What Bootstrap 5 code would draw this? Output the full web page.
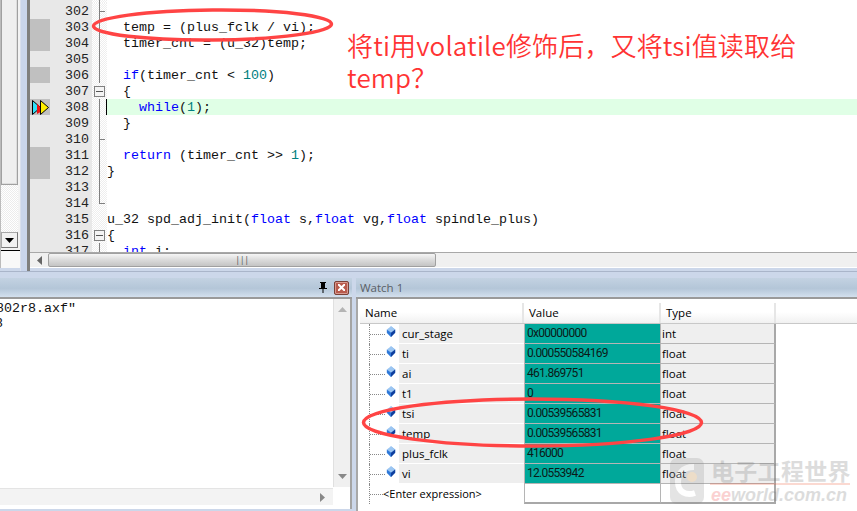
<!DOCTYPE html>
<html lang="zh">
<head>
<meta charset="utf-8">
<title>Watch</title>
<link href="https://cdn.jsdelivr.net/npm/bootstrap@5.3.0/dist/css/bootstrap.min.css" rel="stylesheet">
<style>
html,body{margin:0;padding:0;background:#fff}
.ide-root{position:relative;width:857px;height:511px;overflow:hidden;background:#ccd7ea;font-family:"Open Sans","Liberation Sans",sans-serif;font-size:11.5px;color:#000}
.ide-top{height:271px}
.left-rail{width:20px;height:268px;background:#f3f3f3;border-left:1px solid #bbb}
.rail-thumb{height:185px;width:17px;background:#efefef;border:1px solid #a0a0a0;border-top:0;box-shadow:inset -1px -1px 0 #ddd}
.rail-track{height:47px;width:17px;background:repeating-conic-gradient(#fff 0 25%,#ececec 0 50%) 0 0/2px 2px}
.rail-btn{height:16px;width:17px;background:#f2f2f2;border:1px solid #a8a8a8;border-right-color:#777;border-bottom-color:#777}
.rail-foot{border-top:1px solid #000;margin-top:2px;flex:1;background:#f8f8f8}
.frame-edge{width:10px;background:#c9d5ec;border-left:1px solid #d8dfee;border-right:3px solid #7f7f7f}
.editor{flex:1;min-width:0;height:268px;background:#fff;border-bottom:1px solid #fff}
.code-view{height:253px;overflow:hidden}
.code-row{display:grid;grid-template-columns:20px 42px 15px 1fr;height:16px;font:13.33px/18px "Liberation Mono",monospace;color:#111;white-space:pre;overflow:hidden}
.code-row.stub{height:3px}
.c-mark{background:#e8e8e8;height:16px}
.c-mark.on{background:#c0c0c0}
.c-num{background:#e8e8e8;text-align:right;padding-right:3px;color:#222;height:16px}
.c-fold{display:flex;align-items:center;justify-content:center;height:16px;background-color:#fff;background-image:repeating-conic-gradient(#fff 0 25%,#eee 0 50%);background-size:2px 2px}
.c-fold.vl{background-image:linear-gradient(#808080,#808080),repeating-conic-gradient(#fff 0 25%,#eee 0 50%);background-size:1px 100%,2px 2px;background-position:7px 0,0 0;background-repeat:no-repeat,repeat}
.c-fold.tick{background-image:linear-gradient(#808080,#808080),linear-gradient(#808080,#808080),repeating-conic-gradient(#fff 0 25%,#eee 0 50%);background-size:1px 100%,6px 1px,2px 2px;background-position:7px 0,7px 8px,0 0;background-repeat:no-repeat,no-repeat,repeat}
.c-fold.end{background-image:linear-gradient(#808080,#808080),linear-gradient(#808080,#808080),repeating-conic-gradient(#fff 0 25%,#eee 0 50%);background-size:1px 8px,6px 1px,2px 2px;background-position:7px 0,7px 8px,0 0;background-repeat:no-repeat,no-repeat,repeat}
.fold-box{display:block;width:11px;height:11px;margin-left:-1px;border:1px solid #808080;background:linear-gradient(#555,#555) center/7px 1px no-repeat,#f4f4f4}
.c-code{overflow:hidden;height:16px}
.code-row.cur .c-code{background:#e0ffe6;border-left:1px solid #000;margin-left:-1px}
.kw{color:#00f}.nm{color:#008080}
.hbar{height:15px;background:#f0f0f0;border-top:1px solid #a8a8a8;padding-left:1px}
.hbar-arrow{width:17px}
.hbar-thumb{width:388px;background:linear-gradient(#f6f6f6,#d8d8d8 55%,#c4c4c4);border:1px solid #a0a0a0;border-radius:2px;color:#555;font-size:9px;line-height:12px;letter-spacing:-.5px}
.band{height:7px;background:#ccd7ea;border-top:1px solid #aab5ca}
.ide-bottom{height:233px}
.pane-left{width:352px;background:#ccd7ea}
.pane-head{height:21px;background:linear-gradient(#c3d2e2,#b4c6d8 55%,#d3e0ee);border-bottom:2px solid #9a9a9a}
.pin-ic{margin-right:7px}
.close-ic{width:15px;height:14px;margin-right:3px;background:#b85a4c;border:1px solid #7a4036;border-radius:2px;box-shadow:inset 0 0 0 1px #d89a90}
.pane-body{height:210px;background:#fff;border-right:2px solid #a4a4a4}
.log-text{font:13.33px/15px "Liberation Mono",monospace;padding-top:2px;white-space:pre;color:#111;height:188px}
.log-text div:first-child{margin-left:-4px}
.log-text div:last-child{margin-left:-5px}
.v-scroll{width:17px;height:188px;background:#f0f0f0;border-left:1px solid #e0e0e0}
.h-scroll{height:17px;background:#f3f3f3;margin-top:1px;margin-right:17px;border-top:1px solid #e4e4e4}
.pane-gap{width:4px;background:#ccd7ea}
.pane-right{flex:1;min-width:0}
.tab-title{color:#5a5f66;padding-left:4px;line-height:20px;font-size:11.5px}
.watch-body{height:212px;background:#fff;border-left:2px solid #a8a8a8;padding:4px 0 0 2px}
.w-grid{display:grid;grid-template-columns:164px 137px 115px 1fr}
.w-head{height:21px;line-height:20px;border-bottom:1px solid #c8c8c8;background:linear-gradient(#fff 45%,#f1f1f1)}
.w-head>div{padding-left:5px;border-right:2px solid #e6e6e6}
.w-row{height:20px;line-height:19px}
.w-name{display:flex;height:20px;padding-left:9px}
.w-tree{width:17px;border-left:1px dotted #888;flex:none;background:linear-gradient(90deg,#888 50%,transparent 0) 0 10px/2px 1px repeat-x}
.w-ic{width:13px;flex:none;padding-top:2px;line-height:0}
.w-lab{flex:1;background:#eee;border-bottom:1px solid #fff;padding-left:3px}
.w-val{background:#00a89a;border-left:1px solid #b5b5b5;border-right:1px solid #b5b5b5;border-bottom:1px solid #b5b5b5;padding-left:2px;color:#0c1a18;font-family:Roboto,sans-serif;font-size:12px;letter-spacing:-.72px}
.w-typ{background:#efefef;border-right:2px solid #a8a8a8;border-bottom:1px solid #b5b5b5;padding-left:1px}
.w-val.blank,.w-typ.blank{background:#fff;border-bottom:2px solid #a8a8a8}
.w-enter{display:flex;height:20px;padding-left:9px;line-height:19px;font-size:11px}
.w-enter .w-tree{width:14px}
.ovl{position:absolute;left:0;top:0;pointer-events:none}
.note{position:absolute;left:347px;top:29px;color:#ff3333;font:26px/32px "Noto Sans CJK SC","Noto Sans",sans-serif;letter-spacing:.16px;white-space:pre;font-weight:350;pointer-events:none}
.wm{position:absolute;left:665px;top:452px;width:190px;height:58px;opacity:.22;pointer-events:none;color:#555}
.wm-logo{position:absolute;left:5px;top:6px}
.wm-cn{position:absolute;left:46px;top:6px;font:700 23px/24px "Noto Sans CJK SC",sans-serif;letter-spacing:.3px;white-space:pre;color:#666}
.wm-line{position:absolute;left:45px;top:31px;width:140px;height:2px;background:#e53}
.wm-en{position:absolute;left:46px;top:34px;font:italic 700 18px/18px "Liberation Sans",sans-serif;white-space:pre;color:#666}
.wm-en b{color:#e33;font-weight:700}
</style>
</head>
<body>
<svg width="0" height="0" class="d-block" aria-hidden="true"><defs>
<symbol id="cube" viewBox="0 0 12 14"><path d="M6 0 11 4 11 8 6 13 1 8Z" fill="#6fa8e8"/><path d="M6 0 11 4 6 8 1 4Z" fill="#9cc6f2"/><path d="M11 4 11 8 6 13 6 8Z" fill="#0f3f9e"/><path d="M1 4 1 8 6 13 6 8Z" fill="#2f78d8"/></symbol>
</defs></svg>
<div class="ide-root">
  <div class="ide-top d-flex">
    <div class="left-rail d-flex flex-column">
      <div class="rail-thumb"></div>
      <div class="rail-track"></div>
      <div class="rail-btn d-flex align-items-center justify-content-center"><svg width="9" height="5"><path d="M0 0H9L4.500 5Z" fill="#000"/></svg></div>
      <div class="rail-foot"></div>
    </div>
    <div class="frame-edge"></div>
    <div class="editor d-flex flex-column">
      <div class="code-view">
        <div class="code-row stub"><div class="c-mark"></div><div class="c-num"></div><div class="c-fold vl"></div><div></div></div>
        <div class="code-row"><div class="c-mark"></div><div class="c-num">302</div><div class="c-fold tick"></div><div class="c-code"></div></div>
        <div class="code-row"><div class="c-mark on"></div><div class="c-num">303</div><div class="c-fold vl"></div><div class="c-code">  temp = (plus_fclk / vi);</div></div>
        <div class="code-row"><div class="c-mark on"></div><div class="c-num">304</div><div class="c-fold vl"></div><div class="c-code">  timer_cnt = (u_32)temp;</div></div>
        <div class="code-row"><div class="c-mark"></div><div class="c-num">305</div><div class="c-fold vl"></div><div class="c-code"></div></div>
        <div class="code-row"><div class="c-mark on"></div><div class="c-num">306</div><div class="c-fold vl"></div><div class="c-code">  <span class="kw">if</span>(timer_cnt &lt; <span class="nm">100</span>)</div></div>
        <div class="code-row"><div class="c-mark"></div><div class="c-num">307</div><div class="c-fold"><span class="fold-box"></span></div><div class="c-code">  {</div></div>
        <div class="code-row cur"><div class="c-mark on d-flex align-items-center"><svg width="20" height="15" viewBox="0 0 20 15"><path d="M2.500 .5 10.500 7.500 2.500 14.500Z" fill="#30e0f8" stroke="#000"/><path d="M7 10V3.500L10.500 7.500 10.500 12 7 14Z" fill="#f01010"/><path d="M10.500 .5 18.500 7.500 10.500 14.500Z" fill="#ffee00" stroke="#000"/></svg></div><div class="c-num">308</div><div class="c-fold vl"></div><div class="c-code">    <span class="kw">while</span>(<span class="nm">1</span>);</div></div>
        <div class="code-row"><div class="c-mark"></div><div class="c-num">309</div><div class="c-fold vl"></div><div class="c-code">  }</div></div>
        <div class="code-row"><div class="c-mark"></div><div class="c-num">310</div><div class="c-fold tick"></div><div class="c-code"></div></div>
        <div class="code-row"><div class="c-mark on"></div><div class="c-num">311</div><div class="c-fold vl"></div><div class="c-code">  <span class="kw">return</span> (timer_cnt &gt;&gt; <span class="nm">1</span>);</div></div>
        <div class="code-row"><div class="c-mark on"></div><div class="c-num">312</div><div class="c-fold vl"></div><div class="c-code">}</div></div>
        <div class="code-row"><div class="c-mark"></div><div class="c-num">313</div><div class="c-fold vl"></div><div class="c-code"></div></div>
        <div class="code-row"><div class="c-mark"></div><div class="c-num">314</div><div class="c-fold end"></div><div class="c-code"></div></div>
        <div class="code-row"><div class="c-mark"></div><div class="c-num">315</div><div class="c-fold"></div><div class="c-code">u_32 spd_adj_init(<span class="kw">float</span> s,<span class="kw">float</span> vg,<span class="kw">float</span> spindle_plus)</div></div>
        <div class="code-row"><div class="c-mark"></div><div class="c-num">316</div><div class="c-fold"><span class="fold-box"></span></div><div class="c-code">{</div></div>
        <div class="code-row"><div class="c-mark"></div><div class="c-num">317</div><div class="c-fold vl"></div><div class="c-code">  <span class="kw">int</span> i;</div></div>
      </div>
      <div class="hbar d-flex">
        <div class="hbar-arrow d-flex align-items-center justify-content-center"><svg width="5" height="9"><path d="M5 0V9L0 4.500Z" fill="#666"/></svg></div>
        <div class="hbar-thumb text-center">|||</div>
      </div>
    </div>
  </div>
  <div class="band"></div>
  <div class="ide-bottom d-flex">
    <div class="pane-left">
      <div class="pane-head d-flex justify-content-end align-items-center">
        <svg class="pin-ic" width="8" height="11" viewBox="0 0 8 11"><path d="M1 0H7V1H6V6H8V7H4.500V11H3.500V7H0V6H2V1H1Z" fill="#000"/></svg>
        <div class="close-ic d-flex align-items-center justify-content-center"><svg width="7" height="7"><path d="M0 0 7 7M7 0 0 7" stroke="#fff" stroke-width="2"/></svg></div>
      </div>
      <div class="pane-body d-flex flex-column">
        <div class="d-flex">
          <div class="log-text flex-grow-1 overflow-hidden"><div>802r8.axf"</div><div>8</div></div>
          <div class="v-scroll d-flex flex-column justify-content-between align-items-center py-2">
            <svg width="9" height="5"><path d="M0 5H9L4.500 0Z" fill="#b4b4b4"/></svg>
            <svg width="9" height="5"><path d="M0 0H9L4.500 5Z" fill="#888"/></svg>
          </div>
        </div>
        <div class="h-scroll d-flex justify-content-end align-items-center pe-2"><svg width="5" height="9"><path d="M0 0V9L5 4.500Z" fill="#888"/></svg></div>
      </div>
    </div>
    <div class="pane-gap"></div>
    <div class="pane-right">
      <div class="pane-head tab-title">Watch 1</div>
      <div class="watch-body">
        <div class="w-grid w-head"><div>Name</div><div>Value</div><div>Type</div><div class="border-0"></div></div>
        <div class="w-grid w-row"><div class="w-name"><div class="w-tree"></div><div class="w-ic"><svg width="10" height="12"><use href="#cube"/></svg></div><div class="w-lab">cur_stage</div></div><div class="w-val">0x00000000</div><div class="w-typ">int</div></div>
        <div class="w-grid w-row"><div class="w-name"><div class="w-tree"></div><div class="w-ic"><svg width="10" height="12"><use href="#cube"/></svg></div><div class="w-lab">ti</div></div><div class="w-val">0.000550584169</div><div class="w-typ">float</div></div>
        <div class="w-grid w-row"><div class="w-name"><div class="w-tree"></div><div class="w-ic"><svg width="10" height="12"><use href="#cube"/></svg></div><div class="w-lab">ai</div></div><div class="w-val">461.869751</div><div class="w-typ">float</div></div>
        <div class="w-grid w-row"><div class="w-name"><div class="w-tree"></div><div class="w-ic"><svg width="10" height="12"><use href="#cube"/></svg></div><div class="w-lab">t1</div></div><div class="w-val">0</div><div class="w-typ">float</div></div>
        <div class="w-grid w-row"><div class="w-name"><div class="w-tree"></div><div class="w-ic"><svg width="10" height="12"><use href="#cube"/></svg></div><div class="w-lab">tsi</div></div><div class="w-val">0.00539565831</div><div class="w-typ">float</div></div>
        <div class="w-grid w-row"><div class="w-name"><div class="w-tree"></div><div class="w-ic"><svg width="10" height="12"><use href="#cube"/></svg></div><div class="w-lab">temp</div></div><div class="w-val">0.00539565831</div><div class="w-typ">float</div></div>
        <div class="w-grid w-row"><div class="w-name"><div class="w-tree"></div><div class="w-ic"><svg width="10" height="12"><use href="#cube"/></svg></div><div class="w-lab">plus_fclk</div></div><div class="w-val">416000</div><div class="w-typ">float</div></div>
        <div class="w-grid w-row"><div class="w-name"><div class="w-tree"></div><div class="w-ic"><svg width="10" height="12"><use href="#cube"/></svg></div><div class="w-lab">vi</div></div><div class="w-val">12.0553942</div><div class="w-typ">float</div></div>
        <div class="w-grid w-row"><div class="w-enter"><div class="w-tree"></div><div>&lt;Enter expression&gt;</div></div><div class="w-val blank"></div><div class="w-typ blank"></div></div>
      </div>
    </div>
  </div>
  <div class="wm">
    <svg class="wm-logo" width="34" height="46" viewBox="0 0 34 46"><rect width="34" height="46" rx="7" fill="#888"/><path d="M24 9C11 9 8 17 8 24C8 34 16 38 25 35" fill="none" stroke="#fff" stroke-width="6"/><circle cx="22" cy="19" r="5" fill="#e8a040"/></svg>
    <div class="wm-cn">电子工程世界</div>
    <div class="wm-line"></div>
    <div class="wm-en"><b>ee</b>world.com.cn</div>
  </div>
  <svg class="ovl" width="857" height="511" viewBox="0 0 857 511" fill="none" stroke="#f44" stroke-width="3.500">
    <ellipse cx="212.500" cy="25" rx="119" ry="15" transform="rotate(-.5 212 25)"/>
    <ellipse cx="532.500" cy="422.500" rx="169" ry="23.500"/>
  </svg>
  <div class="note">将ti用volatile修饰后，又将tsi值读取给
temp？</div>
</div>
<script src="https://cdn.jsdelivr.net/npm/bootstrap@5.3.0/dist/js/bootstrap.bundle.min.js"></script>
</body>
</html>
